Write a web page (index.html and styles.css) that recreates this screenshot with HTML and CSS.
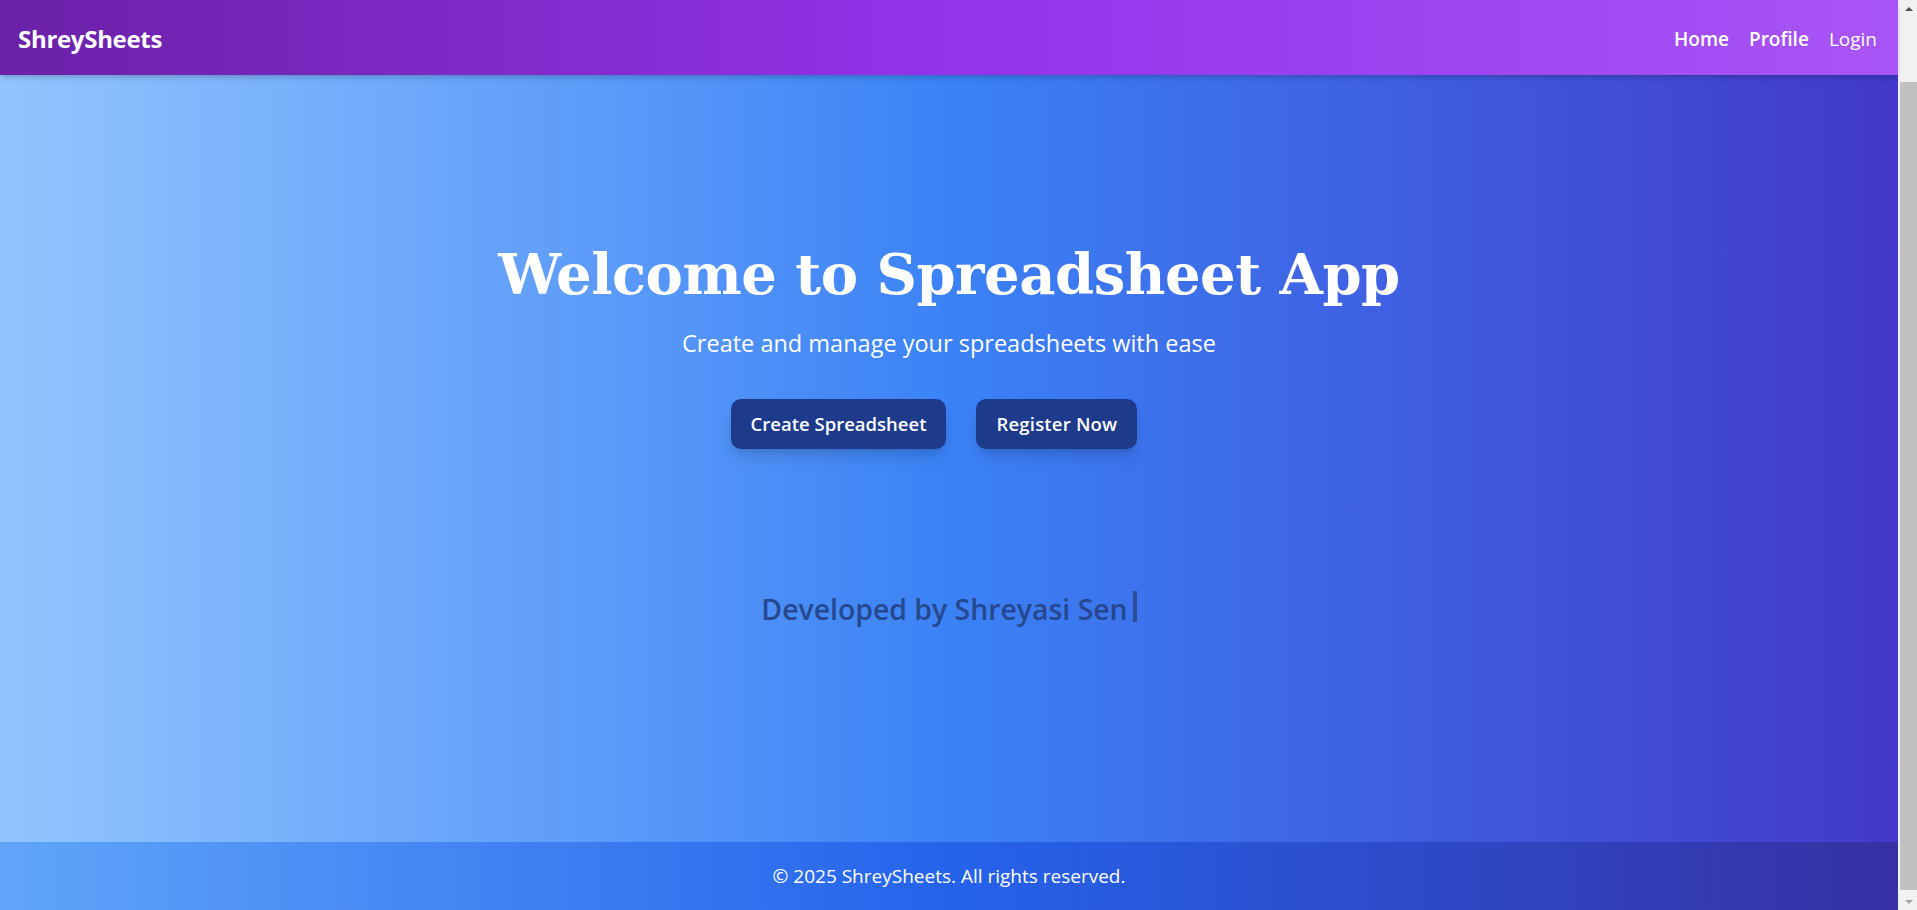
FILE: index.html
```html
<!DOCTYPE html>
<html lang="en">
<head>
<meta charset="utf-8">
<title>ShreySheets</title>
<link rel="stylesheet" href="styles.css">
</head>
<body>
<div class="page">
  <nav class="navbar">
    <a class="brand" href="#">ShreySheets</a>
    <div class="nav-links">
      <a class="nav-link strong" href="#">Home</a>
      <a class="nav-link strong" href="#">Profile</a>
      <a class="nav-link light" href="#">Login</a>
    </div>
  </nav>
  <main class="hero">
    <h1 class="hero-title">Welcome to Spreadsheet App</h1>
    <p class="hero-subtitle">Create and manage your spreadsheets with ease</p>
    <div class="hero-actions">
      <a class="btn" href="#">Create Spreadsheet</a>
      <a class="btn btn-register" href="#">Register Now</a>
    </div>
    <p class="credit"><span class="credit-text">Developed by Shreyasi Sen</span><span class="cursor"></span></p>
  </main>
  <footer class="footer">
    <p class="footer-text">© 2025 ShreySheets. All rights reserved.</p>
  </footer>
</div>
<div class="scrollbar" aria-hidden="true">
  <div class="sb-btn"><span class="arrow-up"></span></div>
  <div class="sb-track"><div class="sb-thumb"></div></div>
  <div class="sb-btn"><span class="arrow-down"></span></div>
</div>
</body>
</html>
```

FILE: styles.css
```css
html, body {
  margin: 0;
  padding: 0;
}
body {
  height: 910px;
  overflow: hidden;
  display: flex;
  font-family: "Open Sans", "Noto Sans", sans-serif;
  color: #fff;
}
a {
  text-decoration: none;
  color: inherit;
}
.page {
  flex: 1;
  display: flex;
  flex-direction: column;
  min-width: 0;
}
.navbar {
  position: relative;
  z-index: 1;
  height: 75px;
  flex: none;
  box-sizing: border-box;
  padding: 2px 21px 0 18px;
  display: flex;
  align-items: center;
  justify-content: space-between;
  background: linear-gradient(to right, #6b21a8, #9333ea, #a855f7);
  box-shadow: 0 4px 6px -1px rgba(0,0,0,0.15), 0 2px 4px -2px rgba(0,0,0,0.1);
}
.brand {
  font-size: 24px;
  font-weight: 700;
  line-height: 32px;
  letter-spacing: -0.3px;
}
.nav-links {
  display: flex;
  gap: 20px;
}
.nav-link {
  font-size: 19px;
  line-height: 28px;
}
.nav-link.strong { font-weight: 600; }
.nav-link.light { font-weight: 400; }
.hero {
  height: 767px;
  flex: none;
  box-sizing: border-box;
  padding-top: 165px;
  display: flex;
  flex-direction: column;
  align-items: center;
  background: linear-gradient(to right, #93c5fd, #3b82f6 50%, #4338ca);
}
.hero-title {
  margin: 0 0 19px;
  font-family: "DejaVu Serif", Georgia, serif;
  font-weight: 700;
  font-size: 56px;
  line-height: 68px;
  letter-spacing: -0.5px;
}
.hero-subtitle {
  margin: 0 0 40px;
  font-size: 23.5px;
  line-height: 32px;
}
.hero-actions {
  display: flex;
}
.btn {
  display: block;
  height: 50px;
  line-height: 50px;
  padding: 0 20px;
  margin-right: 30px;
  border-radius: 10px;
  background: #1e3a8a;
  font-size: 18.5px;
  font-weight: 600;
  box-shadow: 0 10px 15px -3px rgba(0,0,0,0.15), 0 4px 6px -4px rgba(0,0,0,0.1);
}
.btn-register {
  letter-spacing: 0.2px;
}
.credit {
  margin: 142px 0 0;
  font-size: 28.4px;
  line-height: 36px;
  font-weight: 600;
  color: #25488e;
  display: flex;
  align-items: flex-start;
}
.cursor {
  display: block;
  width: 4px;
  height: 31px;
  margin-left: 5px;
  background: #2b4f96;
}
.footer {
  height: 68px;
  flex: none;
  box-sizing: border-box;
  display: flex;
  align-items: center;
  justify-content: center;
  background: linear-gradient(to right, #60a5fa, #2563eb 50%, #3730a3);
}
.footer-text {
  margin: 0;
  font-size: 19px;
  line-height: 24px;
}
.scrollbar {
  width: 19px;
  flex: none;
  display: flex;
  flex-direction: column;
  background: #f1f1f1;
}
.sb-btn {
  height: 17px;
  flex: none;
  display: flex;
  align-items: center;
  justify-content: center;
  padding-left: 2px;
}
.arrow-up {
  width: 0;
  height: 0;
  border-left: 4px solid transparent;
  border-right: 4px solid transparent;
  border-bottom: 4px solid #505050;
}
.arrow-down {
  width: 0;
  height: 0;
  border-left: 4px solid transparent;
  border-right: 4px solid transparent;
  border-top: 4px solid #a3a3a3;
}
.sb-track {
  flex: 1;
  padding: 65px 0 0 2px;
}
.sb-thumb {
  height: 808px;
  background: #c1c1c1;
}
```
